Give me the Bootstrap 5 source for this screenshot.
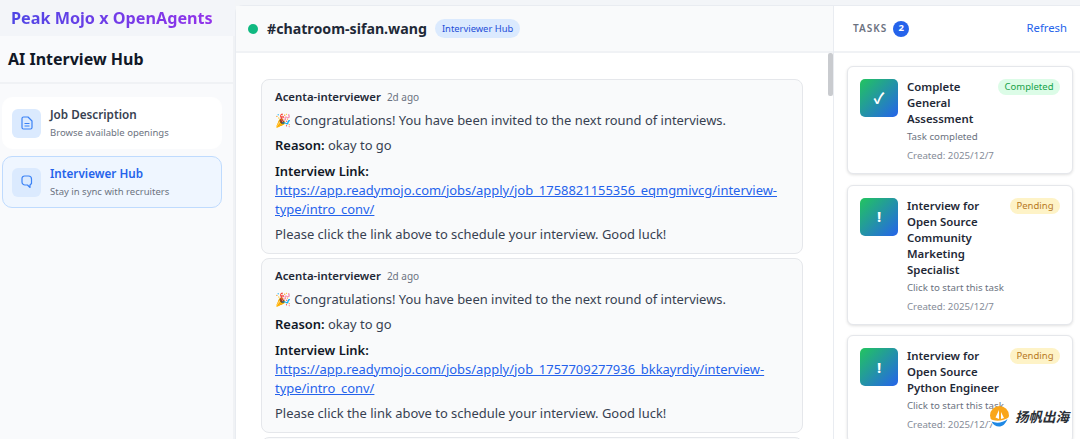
<!DOCTYPE html>
<html lang="en">
<head>
    <meta charset="UTF-8">
    <title>AI Interview Hub</title>
    <link href="https://cdn.jsdelivr.net/npm/bootstrap@5.3.0/dist/css/bootstrap.min.css" rel="stylesheet">
    <style>
        html, body { height: 439px; overflow: hidden; }
        body { background: #f3f5f8; font-family: "Noto Sans", "Noto Sans CJK SC", sans-serif; color: #111827; }
        .app-shell { height: 439px; }
        .side-col { width: 235px; flex: none; }
        .brand-bar { height: 36px; padding: 0 11px; background: #f3f5f9; font-size: 16.2px; line-height: 36px; font-weight: 700; white-space: nowrap; flex: none; }
        .brand-text { background: linear-gradient(90deg, #4f46e5, #9333ea); -webkit-background-clip: text; background-clip: text; color: transparent; }
        .side-panel { background: #f9fafc; border-right: 2px solid #f0f2f5; }
        .side-title { height: 48px; padding: 0 8px; font-size: 16px; line-height: 47px; font-weight: 700; border-bottom: 2px solid #f0f2f5; color: #111827; }
        .nav-stack { padding: 13px 11px 0 2px; gap: 7px; }
        .nav-entry { height: 52px; padding: 0 9px; gap: 9px; background: #fff; border: 1px solid #fff; border-radius: 10px; }
        .nav-entry.current { background: #eff6ff; border-color: #bfdbfe; }
        .nav-icon { width: 29px; height: 29px; border-radius: 6px; background: #dbeafe; color: #3b82f6; flex: none; }
        .nav-name { font-size: 11.7px; line-height: 15px; font-weight: 600; color: #374151; }
        .current .nav-name { color: #2563eb; }
        .nav-sub { font-size: 9.5px; line-height: 15px; margin-top: 3px; color: #6b7280; }
        .chat-col { margin-top: 5px; background: #fff; border-top-left-radius: 8px; border-left: 1px solid #e9ecf1; border-top: 1px solid #e9ecf1; min-width: 0; }
        .chat-head { height: 47px; flex: none; padding: 0 12px; gap: 8px; background: #f9fafb; border-bottom: 2px solid #f0f2f5; }
        .live-dot { width: 10px; height: 10px; border-radius: 50%; background: #10b981; margin-right: 1px; }
        .room-name { font-size: 14.2px; font-weight: 700; color: #1f2937; }
        .room-tag { height: 19px; line-height: 19px; padding: 0 7px; border-radius: 10px; background: #dbeafe; color: #1d4ed8; font-size: 9.4px; }
        .feed-wrap { flex: 1; min-height: 0; overflow: hidden; }
        .feed-list { padding: 26px 30px 0 25px; gap: 4px; }
        .msg-box { height: 175px; flex: none; padding: 9px 13px 0; background: #f9fafb; border: 1px solid #e5e7eb; border-radius: 8px; font-size: 12.95px; line-height: 19.3px; color: #374151; }
        .msg-author { font-size: 11.4px; line-height: 16px; font-weight: 600; color: #1f2937; }
        .msg-time { font-size: 10px; color: #6b7280; margin-left: 3px; font-weight: 400; }
        .msg-box p { margin: 6px 0 0; }
        .msg-box p b { color: #111827; font-weight: 600; }
        .msg-box a { color: #2563eb; }
        .scroll-thumb { position: absolute; top: 0; right: 0; width: 5px; height: 43px; background: #c9cbcf; border-radius: 2px; }
        .task-col { width: 247px; flex: none; margin-top: 5px; background: #fff; border-left: 1px solid #e9ecf1; border-top: 1px solid #e9ecf1; }
        .task-head { height: 47px; flex: none; padding: 0 13px 0 19px; background: #fff; border-bottom: 2px solid #f0f2f5; }
        .task-label { font-size: 10px; font-weight: 600; letter-spacing: 1px; color: #6b7280; }
        .task-count { width: 16px; height: 16px; margin-left: 6px; border-radius: 50%; background: #2563eb; color: #fff; font-size: 9.5px; font-weight: 700; }
        .refresh-btn { font-size: 11.3px; color: #2563eb; text-decoration: none; }
        .task-list { padding: 13px 0 0 13px; width: 246px; gap: 10.6px; }
        .task-card { padding: 12px 12px 10px; gap: 9px; background: #fff; border: 1px solid #e5e7eb; border-radius: 6px; box-shadow: 0 1px 3px rgba(0,0,0,.12); width: 226px; flex: none; }
        .task-badge-icon { width: 38px; height: 38px; flex: none; border-radius: 5px; background: linear-gradient(135deg, #22c55e, #2563eb); color: #fff; font-size: 15px; font-weight: 700; }
        .task-main { min-width: 0; flex: 1; }
        .task-name { font-size: 11.4px; line-height: 16px; font-weight: 600; color: #1f2937; }
        .task-note { font-size: 9.7px; line-height: 14px; margin-top: 3px; color: #6b7280; }
        .task-date { font-size: 9.7px; line-height: 14px; margin-top: 5px; color: #868c98; }
        .state-pill { flex: none; height: 16px; line-height: 16px; padding: 0 6.500px; border-radius: 8px; font-size: 9.5px; }
        .state-done { background: #dcfce7; color: #16a34a; }
        .state-wait { background: #fef3c7; color: #b7791f; }
        .watermark { position: absolute; left: 989px; top: 406px; gap: 5px; }
        .watermark-text { font-size: 13.5px; font-weight: 700; font-style: italic; color: #2b2f36; font-family: "Noto Sans CJK SC", sans-serif; }
    </style>
</head>
<body>
    <div class="app-shell d-flex">
        <div class="side-col d-flex flex-column">
            <div class="brand-bar"><span class="brand-text">Peak Mojo x OpenAgents</span></div>
            <div class="side-panel flex-grow-1">
                <div class="side-title">AI Interview Hub</div>
                <div class="nav-stack d-flex flex-column">
                    <div class="nav-entry d-flex align-items-center">
                        <div class="nav-icon d-flex align-items-center justify-content-center">
                            <svg width="12" height="14" viewBox="0 0 12 14" fill="none" stroke="currentColor" stroke-width="1.2" stroke-linejoin="round"><path d="M2.500 1h4.500l4 4v6.500a1.500 1.500 0 0 1-1.500 1.500h-7A1.500 1.500 0 0 1 1 11.500v-9A1.500 1.500 0 0 1 2.500 1z"/><path d="M3.500 7.500h5M3.500 10h5"/></svg>
                        </div>
                        <div>
                            <div class="nav-name">Job Description</div>
                            <div class="nav-sub">Browse available openings</div>
                        </div>
                    </div>
                    <div class="nav-entry current d-flex align-items-center">
                        <div class="nav-icon d-flex align-items-center justify-content-center">
                            <svg width="12" height="14" viewBox="0 0 12 14" fill="none" stroke="currentColor" stroke-width="1.2" stroke-linejoin="round"><path d="M3.500 1h4a3 3 0 0 1 3 3v4.500l-1.500 1.500v2.500l-2.500-2.500H4a3 3 0 0 1-3-3V3.500A2.500 2.500 0 0 1 3.500 1z"/></svg>
                        </div>
                        <div>
                            <div class="nav-name">Interviewer Hub</div>
                            <div class="nav-sub">Stay in sync with recruiters</div>
                        </div>
                    </div>
                </div>
            </div>
        </div>

        <div class="chat-col flex-grow-1 d-flex flex-column">
            <div class="chat-head d-flex align-items-center">
                <span class="live-dot"></span>
                <span class="room-name">#chatroom-sifan.wang</span>
                <span class="room-tag">Interviewer Hub</span>
            </div>
            <div class="feed-wrap position-relative">
                <div class="scroll-thumb"></div>
                <div class="feed-list d-flex flex-column">
                    <div class="msg-box">
                        <div class="msg-author">Acenta-interviewer <span class="msg-time">2d ago</span></div>
                        <p>🎉 Congratulations! You have been invited to the next round of interviews.</p>
                        <p><b>Reason:</b> okay to go</p>
                        <p><b>Interview Link:</b><br><a href="#">https://app.readymojo.com/jobs/apply/job_1758821155356_eqmgmivcg/interview-type/intro_conv/</a></p>
                        <p>Please click the link above to schedule your interview. Good luck!</p>
                    </div>
                    <div class="msg-box">
                        <div class="msg-author">Acenta-interviewer <span class="msg-time">2d ago</span></div>
                        <p>🎉 Congratulations! You have been invited to the next round of interviews.</p>
                        <p><b>Reason:</b> okay to go</p>
                        <p><b>Interview Link:</b><br><a href="#">https://app.readymojo.com/jobs/apply/job_1757709277936_bkkayrdiy/interview-type/intro_conv/</a></p>
                        <p>Please click the link above to schedule your interview. Good luck!</p>
                    </div>
                    <div class="msg-box"></div>
                </div>
            </div>
        </div>

        <div class="task-col d-flex flex-column">
            <div class="task-head d-flex align-items-center">
                <span class="task-label">TASKS</span>
                <span class="task-count d-flex align-items-center justify-content-center">2</span>
                <a href="#" class="refresh-btn ms-auto">Refresh</a>
            </div>
            <div class="task-list d-flex flex-column">
                <div class="task-card d-flex">
                    <div class="task-badge-icon d-flex align-items-center justify-content-center">✓</div>
                    <div class="task-main">
                        <div class="d-flex justify-content-between align-items-start gap-1">
                            <div class="task-name">Complete General Assessment</div>
                            <span class="state-pill state-done">Completed</span>
                        </div>
                        <div class="task-note">Task completed</div>
                        <div class="task-date">Created: 2025/12/7</div>
                    </div>
                </div>
                <div class="task-card d-flex">
                    <div class="task-badge-icon d-flex align-items-center justify-content-center">!</div>
                    <div class="task-main">
                        <div class="d-flex justify-content-between align-items-start gap-1">
                            <div class="task-name">Interview for Open Source Community Marketing Specialist</div>
                            <span class="state-pill state-wait">Pending</span>
                        </div>
                        <div class="task-note">Click to start this task</div>
                        <div class="task-date">Created: 2025/12/7</div>
                    </div>
                </div>
                <div class="task-card d-flex">
                    <div class="task-badge-icon d-flex align-items-center justify-content-center">!</div>
                    <div class="task-main">
                        <div class="d-flex justify-content-between align-items-start gap-1">
                            <div class="task-name">Interview for Open Source Python Engineer</div>
                            <span class="state-pill state-wait">Pending</span>
                        </div>
                        <div class="task-note">Click to start this task</div>
                        <div class="task-date">Created: 2025/12/7</div>
                    </div>
                </div>
            </div>
        </div>
    </div>

    <div class="watermark d-flex align-items-center">
        <svg width="21" height="21" viewBox="0 0 21 21">
            <circle cx="10.500" cy="9.500" r="9.500" fill="#f9a61a"/>
            <path d="M0 12c4 3.500 13 4.500 21-1.500-1 6-5.500 10-10.500 10S1 17 0 12z" fill="#fff"/>
            <path d="M2.500 15.500c5 2 11 1.500 16-2.500-2 5-5 7.500-8.500 7.500-3 0-6-1.800-7.500-5z" fill="#1e88e5"/>
            <path d="M10 4v9l-3.500-1.500zM12 6l3 6-3 1z" fill="#fff"/>
        </svg>
        <span class="watermark-text">扬帆出海</span>
    </div>

    <script src="https://cdn.jsdelivr.net/npm/bootstrap@5.3.0/dist/js/bootstrap.bundle.min.js"></script>
</body>
</html>
